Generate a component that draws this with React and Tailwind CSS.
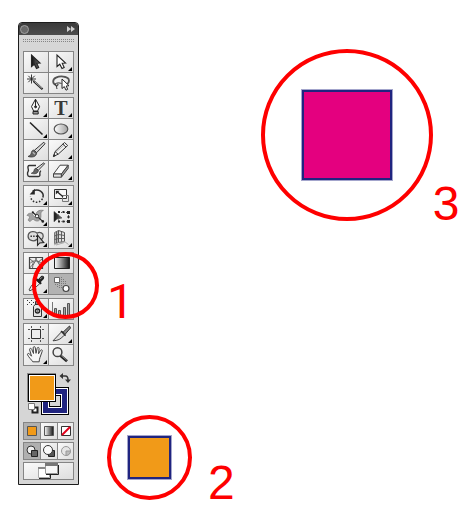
import React from "react";
import clsx from "clsx";

const INK = "#252525";

function Arrow({ x = 0, y = 0, fill = INK }) {
  return (
    <path
      transform={`translate(${x} ${y})`}
      d="M0 0V11.5L2.8 9.2L5 13.6L7.2 12.5L5.2 8.3L8.6 8Z"
      fill={fill}
      stroke={INK}
      strokeWidth="1.1"
    />
  );
}

const icons = {
  selection: <Arrow x={7.5} y={3} fill="url(#dark)" />,
  direct: <Arrow x={8} y={3} fill="#fff" />,
  wand: (
    <g stroke={INK} fill="none">
      <path d="M7.5 1.5V10.5M3 6H12M4.3 2.8L10.7 9.2M10.7 2.8L4.3 9.2" strokeWidth="0.9" />
      <path d="M9.5 8L18.5 16.2" strokeWidth="2.2" />
      <path d="M10.5 8.5L18 15.3" stroke="#ccc" strokeWidth="0.9" />
    </g>
  ),
  lasso: (
    <g fill="none" stroke="#333">
      <path d="M7 11.6C3.2 11 3.3 6.3 7 4.6C11 2.7 18 3.2 19.6 6C20.6 8.2 19.5 10.2 17.6 11" stroke="#555" strokeWidth="1.8" />
      <path d="M12.5 10.5C9 9.2 5.6 10.3 6 12.1C6.6 13.8 10.3 12.6 9 11.2C7.8 10.8 7 13 8 16" strokeWidth="1" />
      <path d="M13 6V15.5L15.3 13.6L17 17.2L18.7 16.3L17.2 13L20 12.7Z" fill="#fff" stroke={INK} />
    </g>
  ),
  pen: (
    <g stroke={INK} strokeWidth="1">
      <path d="M11.5 1.2L7.5 8.6L9.6 13H13.6L15.6 8.6Z" fill="#f6f6f6" />
      <path d="M9 13.5H14.2V16H9Z" fill="#999" />
      <path d="M11.5 1.5V8" />
      <circle cx="11.6" cy="8.8" r="1" fill={INK} />
    </g>
  ),
  line: <path d="M6 3.5L18.5 15.5" stroke={INK} strokeWidth="1.6" />,
  ellipse: <ellipse cx="12" cy="10" rx="6.8" ry="5" fill="url(#metal)" stroke="#555" strokeWidth="1.2" />,
  brush: (
    <g>
      <path d="M19.8 2.2L10.3 10.4L12.6 12.7L21 3.8Z" fill="#d5d5d5" stroke={INK} strokeWidth="0.9" />
      <path d="M9.8 10C7.5 10.2 7.6 12 7 13.8C6.4 15.4 5.3 16 4 16.4C8 18 12.8 16.6 12.7 12.8Z" fill="#666" stroke="#333" strokeWidth="0.7" />
      <path d="M8.8 12.3L11 14.3" stroke="#bbb" strokeWidth="1.2" />
    </g>
  ),
  pencil: (
    <g stroke="#333" strokeWidth="1" strokeLinejoin="round">
      <path d="M15.5 2.5L18.7 5.5L9.2 14.2L4.5 16.4L6 11.6Z" fill="#f2f2f2" />
      <path d="M13.8 4L17 7.2M6 11.6L9.2 14.2" />
      <path d="M7.2 12L15.6 4.6" stroke="#999" strokeWidth="0.7" />
      <path d="M4.4 16.6L5.1 14.4L6.5 15.6Z" fill={INK} />
    </g>
  ),
  blob: (
    <g>
      <path d="M12 4.5H5.5C4 4.5 3.8 5.6 4 7C4.2 8.5 5 9.5 4 10.7C3.2 12 3.3 15.5 5.3 15.5H14.3C16.2 15.5 16 14 15.8 12.6C15.7 11.6 16 10.6 16.8 9.6" fill="#f4f4f4" stroke="#333" strokeWidth="1.4" />
      <path d="M19.8 1.8L12.3 7.4L14.2 9.4L20.6 2.8Z" fill="#ddd" stroke={INK} strokeWidth="0.9" />
      <path d="M12 7.2C10 7.5 10.3 9.4 9.6 10.6C9 11.5 8.2 12 7.3 12.3C10.6 13.4 14.3 12.6 14.3 9.6Z" fill="#666" stroke="#333" strokeWidth="0.7" />
    </g>
  ),
  eraser: (
    <g stroke="#444" strokeWidth="1" strokeLinejoin="round">
      <path d="M4.5 13L11 4.2H19.2L12.4 13Z" fill="#fafafa" />
      <path d="M4.5 13H12.4V16.2H4.5Z" fill="#e4e4e4" />
      <path d="M12.4 13L19.2 4.2V7.4L12.4 16.2Z" fill="#9a9a9a" />
    </g>
  ),
  rotate: (
    <g fill="none" stroke="#2e2e2e" strokeWidth="1.5">
      <path d="M8.6 5.2C14.5 1.8 20.5 6.5 18.9 11.5" />
      <path d="M18.5 12.7C15.2 18.4 7.5 17 6.4 10.4" strokeDasharray="1.5 1.7" />
      <path d="M10.8 2.8V8.4H5.6Z" fill={INK} stroke="none" />
    </g>
  ),
  scale: (
    <g fill="none" stroke="#333">
      <path d="M5.5 3.5H17.5V12.5H5.5Z" fill="#f8f8f8" />
      <path d="M13.5 9.5H19.5V15.5H13.5Z" stroke="#777" />
      <path d="M8.5 6L14 10.8" stroke={INK} strokeWidth="1.3" />
      <path d="M6.8 4.8H10.6L6.8 8.5Z" fill={INK} stroke="none" />
    </g>
  ),
  warp: (
    <g>
      <path d="M3 8.5C4.6 5.4 8 5.7 9.3 8.4C10.3 10.4 12 10.4 12 8C12 4.8 14.6 2.6 19.4 3.4C15.6 4.8 17.6 8 16.6 11.3C15.6 14.4 12.5 14.8 10 12.8C8.3 11.2 7.6 14 6 14.3C4.4 14.5 4 13 4.6 12C6.6 10.2 5 8.4 3 8.5Z" fill="#a3a3a3" stroke="#777" strokeWidth="0.7" />
      <path d="M9 5.5L19 14.6" stroke={INK} strokeWidth="1.1" />
      <circle cx="8.8" cy="5.4" r="1.1" fill={INK} />
      <circle cx="13" cy="9.2" r="1.7" fill="#fff" stroke="#333" />
      <circle cx="18.8" cy="14.4" r="1.3" fill={INK} />
    </g>
  ),
  transform: (
    <g>
      <path d="M9.5 5.5H19.5V14.5H9.5Z" fill="none" stroke="#555" strokeDasharray="1 1.5" />
      <path d="M9 4h2v2H9zM13.5 4h2v2h-2zM18 4h3v3h-3zM18.5 9h2v2h-2zM9 13.5h2v2H9zM13.5 13.5h2v2h-2zM18 13h3v3h-3z" fill={INK} />
      <path d="M5 4.5V14.8L8 12L13 11Z" fill="url(#dark)" stroke="#444" strokeWidth="0.6" />
    </g>
  ),
  shape: (
    <g>
      <path d="M8.5 3.6C10.6 3.4 12 4 13 5.2C16 3.4 19.4 5.2 19.2 8.3C19 11.6 15.8 12.8 13 11.2C9.5 14.6 4.2 12.2 4.1 8.2C4.2 5.6 6 3.8 8.5 3.6Z" fill="#dedede" stroke="#555" strokeWidth="1.3" />
      <path d="M6.5 8.3H14" stroke={INK} strokeWidth="1.4" strokeDasharray="1.4 1.3" />
      <path d="M13.5 7V17.4L15.7 15L19.8 14.6Z" fill="#c9c9c9" stroke={INK} strokeWidth="1.1" />
    </g>
  ),
  perspective: (
    <g fill="none" stroke="#555">
      <path d="M5.5 4.5L9.5 2.5V14.5L5.5 15.5Z" fill="#b5b5b5" stroke="#777" />
      <path d="M9.5 2.5L15.5 4.5V13.5L9.5 14.5Z" fill="#e2e2e2" />
      <path d="M12.5 3.5V14M9.5 6.5L15.5 7.5M9.5 10.5H15.5M5.5 8L9.5 6.5M5.5 11.5L9.5 10.5M7.5 3.5V15" strokeWidth="0.9" />
      <path d="M5 17L9.5 14.5L15.5 13.5L19.5 16.5M7 17L15.5 14.5" stroke="#999" strokeWidth="0.8" />
    </g>
  ),
  mesh: (
    <g fill="none" stroke="#444">
      <path d="M5.5 4.5H18.5V15.5H5.5Z" fill="#eee" strokeWidth="1.2" />
      <path d="M6 10.5C8.5 7 14 7 18 10.5M8.5 15C8 11 12.5 9 12 5M16 15C17 12 12.5 9 12 5M6 14.5C8 13 9 11.5 9.3 8.6M18 14.5C16 13 15 11.5 14.7 8.6M6 6L9.3 8.6M18 6L14.7 8.6" stroke="#5a5a5a" strokeWidth="0.9" />
    </g>
  ),
  gradient: <path d="M5.5 4.5H20.5V15.5H5.5Z" fill="url(#fade)" stroke="#222" />,
  eyedropper: (
    <g>
      <path d="M12.3 6.2L15.8 9.7L9.5 15L5.8 16.8L5 16L7 12.4Z" fill="#ededed" stroke="#333" strokeWidth="0.9" />
      <path d="M11.2 5.2L13 4.2L14.2 5.2L17 2.2C18.8.9 21.2 3 19.8 5L16.9 7.9L17.8 9.2L16.5 10.6Z" fill="#222" />
      <path d="M16 5L18.5 3" stroke="#888" />
    </g>
  ),
  blend: (
    <g>
      <path d="M12 3h1v1h-1zM12 5h1v1h-1zM14 5h1v1h-1zM12 7h1v1h-1zM14 7h1v1h-1zM16 7h1v1h-1zM6 10h1v1H6zM8 10h1v1H8zM10 9h1v1h-1zM12 9h1v1h-1zM14 9h1v1h-1zM16 9h1v1h-1zM8 12h1v1H8zM10 11h1v1h-1zM12 11h1v1h-1zM10 13h1v1h-1zM12 13h1v1h-1z" fill="#7a7a7a" />
      <path d="M5.5 3.5H10.5V8.5H5.5Z" fill="#fff" stroke="#666" />
      <circle cx="17" cy="14.5" r="3" fill="#fff" stroke="#444" strokeWidth="1.2" />
    </g>
  ),
  spray: (
    <g>
      <path d="M3 1h1v1H3zM5 3h1v1H5zM7 1h1v1H7zM9 3h1v1H9zM3 5h1v1H3zM7 5h1v1H7z" fill="#333" />
      <path d="M11.5 2.5H15.5V5.5H11.5Z" fill="#888" stroke="#333" />
      <path d="M9.5 7.5L11 5.5H16L17.5 7.5V17.5H9.5Z" fill="#e5e5e5" stroke="#333" />
      <circle cx="13.5" cy="12" r="2" fill="#fff" stroke={INK} strokeWidth="1.5" />
      <circle cx="13.5" cy="12" r="0.7" fill="#333" />
    </g>
  ),
  graph: (
    <g fill="#a5a5a5" stroke="#555">
      <path d="M3.5 3V17" fill="none" stroke="#777" />
      <path d="M5.5 9.5h2v7h-2zM9.5 11.5h2v5h-2zM14.5 8.5h2v8h-2zM18.5 4.5h2v12h-2z" />
    </g>
  ),
  artboard: (
    <g fill="none" stroke="#555">
      <path d="M7.5 5.5H16.5V14.5H7.5Z" fill="#eee" stroke="#333" />
      <path d="M7.5 2V4M16.5 2V4M7.5 16V18M16.5 16V18M4 5.5H6M18 5.5H20M4 14.5H6M18 14.5H20" />
    </g>
  ),
  slice: (
    <g>
      <path d="M20.5 2L13.8 8.4L16 10.4L21.5 4Z" fill="#888" stroke={INK} strokeWidth="0.9" />
      <path d="M13 7.3L4 16.8C8.5 16.7 12.3 15 14.5 11.8L16.6 10.2Z" fill="#ddd" stroke="#333" strokeWidth="0.9" />
      <path d="M12 7L16.5 11.8" stroke={INK} strokeWidth="1.2" />
    </g>
  ),
  hand: (
    <path
      d="M8.8 16.8C7.5 14.7 4.9 12.7 3.5 9.7C3.2 8.3 4.9 8 5.7 9.1L7.5 11.2L5.6 4.7C5.3 3.2 7.2 2.8 7.7 4.2L9.5 8.5L9.2 2.8C9.2 1.3 11.1 1.2 11.3 2.7L12 8.3L13.2 3.2C13.6 1.8 15.3 2.3 15.1 3.7L14.5 8.8L16.5 5.4C17.3 4.2 18.8 4.9 18.2 6.3L16 12.5C15.4 14.2 15.2 15.3 15.2 16.8Z"
      fill="#f7f7f7"
      stroke="#444"
      strokeWidth="1"
    />
  ),
  zoom: (
    <g>
      <path d="M11 10.2L18 16.2" stroke={INK} strokeWidth="2.8" />
      <path d="M12 10.4L17.7 15.2" stroke="#999" strokeWidth="0.8" />
      <circle cx="8.5" cy="7.2" r="4.4" fill="#eee" stroke="#444" strokeWidth="1.5" />
    </g>
  ),
};

// [icon, label, has flyout]
const groups = [
  [
    ["selection", "Selection"],
    ["direct", "Direct Selection", true],
    ["wand", "Magic Wand"],
    ["lasso", "Lasso"],
  ],
  [
    ["pen", "Pen", true],
    ["type", "Type", true],
    ["line", "Line Segment", true],
    ["ellipse", "Ellipse", true],
    ["brush", "Paintbrush"],
    ["pencil", "Pencil", true],
    ["blob", "Blob Brush"],
    ["eraser", "Eraser", true],
  ],
  [
    ["rotate", "Rotate", true],
    ["scale", "Scale", true],
    ["warp", "Warp", true],
    ["transform", "Free Transform"],
    ["shape", "Shape Builder", true],
    ["perspective", "Perspective Grid", true],
  ],
  [
    ["mesh", "Mesh"],
    ["gradient", "Gradient"],
    ["eyedropper", "Eyedropper", true],
    ["blend", "Blend"],
  ],
  [
    ["spray", "Symbol Sprayer", true],
    ["graph", "Column Graph"],
  ],
  [
    ["artboard", "Artboard"],
    ["slice", "Slice", true],
    ["hand", "Hand", true],
    ["zoom", "Zoom"],
  ],
];

function ToolButton({ icon, label, flyout }) {
  const active = icon === "blend";
  return (
    <button
      type="button"
      aria-label={label}
      aria-pressed={active}
      className={clsx(
        "relative flex h-5 items-center justify-center overflow-hidden",
        active ? "bg-[#b2b2b2]" : "bg-linear-to-br from-[#fafafa] to-[#dedede]"
      )}
    >
      {icon === "type" ? (
        <span className="font-['Liberation_Serif',serif] text-xl leading-5 font-bold text-[#252525] opacity-90">T</span>
      ) : (
        <svg viewBox="0 0 24 20" className="h-5 w-6 shrink-0">
          {icons[icon]}
        </svg>
      )}
      {flyout && (
        <svg viewBox="0 0 4 4" className="absolute right-px bottom-px size-1">
          <path d="M4 0V4H0Z" fill="#000" />
        </svg>
      )}
    </button>
  );
}

function ModeButton({ label, active, children }) {
  return (
    <button
      type="button"
      aria-label={label}
      aria-pressed={active}
      className={clsx(
        "flex h-4 items-center justify-center overflow-hidden",
        active ? "bg-[#b0b0b0]" : "bg-linear-to-br from-[#fafafa] to-[#dedede]"
      )}
    >
      <svg viewBox="0 0 16 16" className="size-4 shrink-0">
        {children}
      </svg>
    </button>
  );
}

function ColorWell() {
  return (
    <div className="flex h-[53px] justify-center pt-1">
      <svg viewBox="0 0 44 44" className="size-11">
        {/* stroke swatch */}
        <path d="M14 14H42V42H14Z" fill="#000" />
        <path d="M15 15H41V41H15Z" fill="#fff" />
        <path d="M16 16H40V40H16Z" fill="#20247f" />
        <path d="M21 21H35V35H21Z" fill="#fff" />
        <path d="M22 22H34V34H22Z" fill="#000" />
        <path d="M23 23H33V33H23Z" fill="#d6d6d6" />
        {/* fill swatch */}
        <path d="M0 0H29V29H0Z" fill="#888" />
        <path d="M1 1H29V29H1Z" fill="#000" />
        <path d="M2 2H28V28H2Z" fill="#fff" />
        <path d="M3 3H27V27H3Z" fill="#f19a18" />
        {/* swap */}
        <path d="M35.5 3H38.5C40.5 3 41 4.5 41 7" fill="none" stroke="#333" strokeWidth="1.5" />
        <path d="M36 0V6L32.5 3ZM38 6.5H44L41 10Z" fill="#333" />
        {/* defaults */}
        <path d="M5.5 34.5H10.5V39.5H5.5Z" fill="#fff" stroke="#222" strokeWidth="2" />
        <path d="M1.5 30.5H7.5V36.5H1.5Z" fill="#fff" stroke="#777" />
      </svg>
    </div>
  );
}

function Toolbox() {
  return (
    <aside className="mt-[22px] ml-[18px] w-[61px] shrink-0 self-start overflow-hidden rounded-t border border-[#1d1d1d] bg-[#d6d6d6]">
      <header className="flex h-3 items-center justify-between bg-linear-to-b from-[#3b3b3b] to-[#4b4b4b] px-px">
        <button type="button" aria-label="Close" className="size-[9px] rounded-full border border-[#a0a0a0] bg-[#6a6a6a]" />
        <button type="button" aria-label="Collapse" className="mr-0.5">
          <svg viewBox="0 0 8 6" className="h-1.5 w-2">
            <path d="M0 0L4 3L0 6ZM4 0L8 3L4 6Z" fill="#cfcfcf" />
          </svg>
        </button>
      </header>
      <svg className="mx-1 mt-1 h-[3px] w-[51px]">
        <defs>
          <pattern id="grip" width="2" height="2" patternUnits="userSpaceOnUse">
            <path d="M0 0h1v1H0z" fill="#858585" />
          </pattern>
          <linearGradient id="metal">
            <stop offset="0" stopColor="#fff" />
            <stop offset="1" stopColor="#a2a2a2" />
          </linearGradient>
          <linearGradient id="fade">
            <stop offset="0" stopColor="#fff" />
            <stop offset="1" stopColor="#111" />
          </linearGradient>
          <linearGradient id="dark">
            <stop offset="0" stopColor="#111" />
            <stop offset="1" stopColor="#777" />
          </linearGradient>
        </defs>
        <rect width="51" height="3" fill="url(#grip)" />
      </svg>
      <div className="mx-1 mt-[9px] flex flex-col gap-[3px]">
        {groups.map((tools, i) => (
          <div key={i} className="grid grid-cols-2 gap-px bg-[#858585] p-px">
            {tools.map(([icon, label, flyout]) => (
              <ToolButton key={icon} icon={icon} label={label} flyout={flyout} />
            ))}
          </div>
        ))}
        <ColorWell />
      </div>
      <div className="mx-1 mb-1 flex flex-col gap-0.5">
        <div className="grid grid-cols-[16px_16px_1fr] gap-px bg-[#858585] p-px">
          <ModeButton label="Color" active>
            <path d="M3.5 3.5H12.5V12.5H3.5Z" fill="#f19a18" stroke="#555" />
          </ModeButton>
          <ModeButton label="Gradient">
            <path d="M3.5 3.5H12.5V12.5H3.5Z" fill="url(#fade)" stroke="#555" />
          </ModeButton>
          <ModeButton label="None">
            <path d="M3.5 3.5H12.5V12.5H3.5Z" fill="#fff" stroke="#333" />
            <path d="M4 12L12 4" stroke="#e3001b" strokeWidth="2" />
          </ModeButton>
        </div>
        <div className="grid grid-cols-[16px_16px_1fr] gap-px bg-[#858585] p-px">
          <ModeButton label="Draw Normal" active>
            <circle cx="7" cy="7" r="4" fill="#eee" stroke="#333" />
            <path d="M7.5 7.5H13.5V13.5H7.5Z" fill="#666" stroke="#222" />
          </ModeButton>
          <ModeButton label="Draw Behind">
            <path d="M7.5 7.5H13.5V13.5H7.5Z" fill="#555" stroke="#222" />
            <circle cx="7" cy="7" r="4.5" fill="#fafafa" stroke="#333" />
          </ModeButton>
          <ModeButton label="Draw Inside">
            <circle cx="8" cy="8" r="4.5" fill="#e6e6e6" stroke="#999" />
            <path d="M8 8H12.5C12.5 10.5 10.5 12.5 8 12.5Z" fill="#bbb" stroke="#999" />
          </ModeButton>
        </div>
        <button
          type="button"
          aria-label="Change Screen Mode"
          className="flex h-[18px] items-center justify-center border border-[#858585] bg-linear-to-br from-[#fafafa] to-[#dedede]"
        >
          <svg viewBox="0 0 24 16" className="h-4 w-6 shrink-0">
            <path d="M1.5 4.5H12.5V14.5H1.5Z" fill="#fff" stroke="#aaa" />
            <path d="M2 15.5H13.5V6" fill="none" stroke="#222" />
            <path d="M1 4h12v2H1z" fill="#888" />
            <path d="M8.5 .5H20.5V10.5H8.5Z" fill="#f8f8f8" stroke="#999" />
            <path d="M8 0h13v3H8z" fill="#777" />
            <path d="M9 11.5H21.5V2" fill="none" stroke="#222" />
          </svg>
        </button>
      </div>
    </aside>
  );
}

function Step({ number, className, ring, square }) {
  return (
    <figure className={clsx("flex shrink-0 items-end", className)}>
      <div className={clsx("flex items-center justify-center rounded-full border-4 border-[#fe0000]", ring)}>
        <div className={clsx("border-2 border-[#20247f] ring-1 ring-[#a3a5cc]", square)} />
      </div>
      <figcaption className="text-5xl leading-[34px]">{number}</figcaption>
    </figure>
  );
}

export default function App() {
  return (
    <main className="relative flex min-h-screen items-start overflow-hidden bg-white font-['Liberation_Sans',Arial,sans-serif] text-[#fe0000]">
      <Toolbox />
      <Step
        number="2"
        className="mt-[415px] ml-7 gap-4"
        ring="size-[85px]"
        square="size-[43px] bg-[#f19a18]"
      />
      <Step
        number="3"
        className="mt-[49px] ml-[26px]"
        ring="size-[172px]"
        square="size-[90px] bg-[#e4007f]"
      />
      {/* marker over the blend tool */}
      <div className="pointer-events-none absolute top-[252px] left-8 flex items-end gap-2">
        <div className="size-[67px] rounded-full border-4 border-[#fe0000]" />
        <span className="font-[Roboto,sans-serif] text-5xl leading-[34px]">1</span>
      </div>
    </main>
  );
}
